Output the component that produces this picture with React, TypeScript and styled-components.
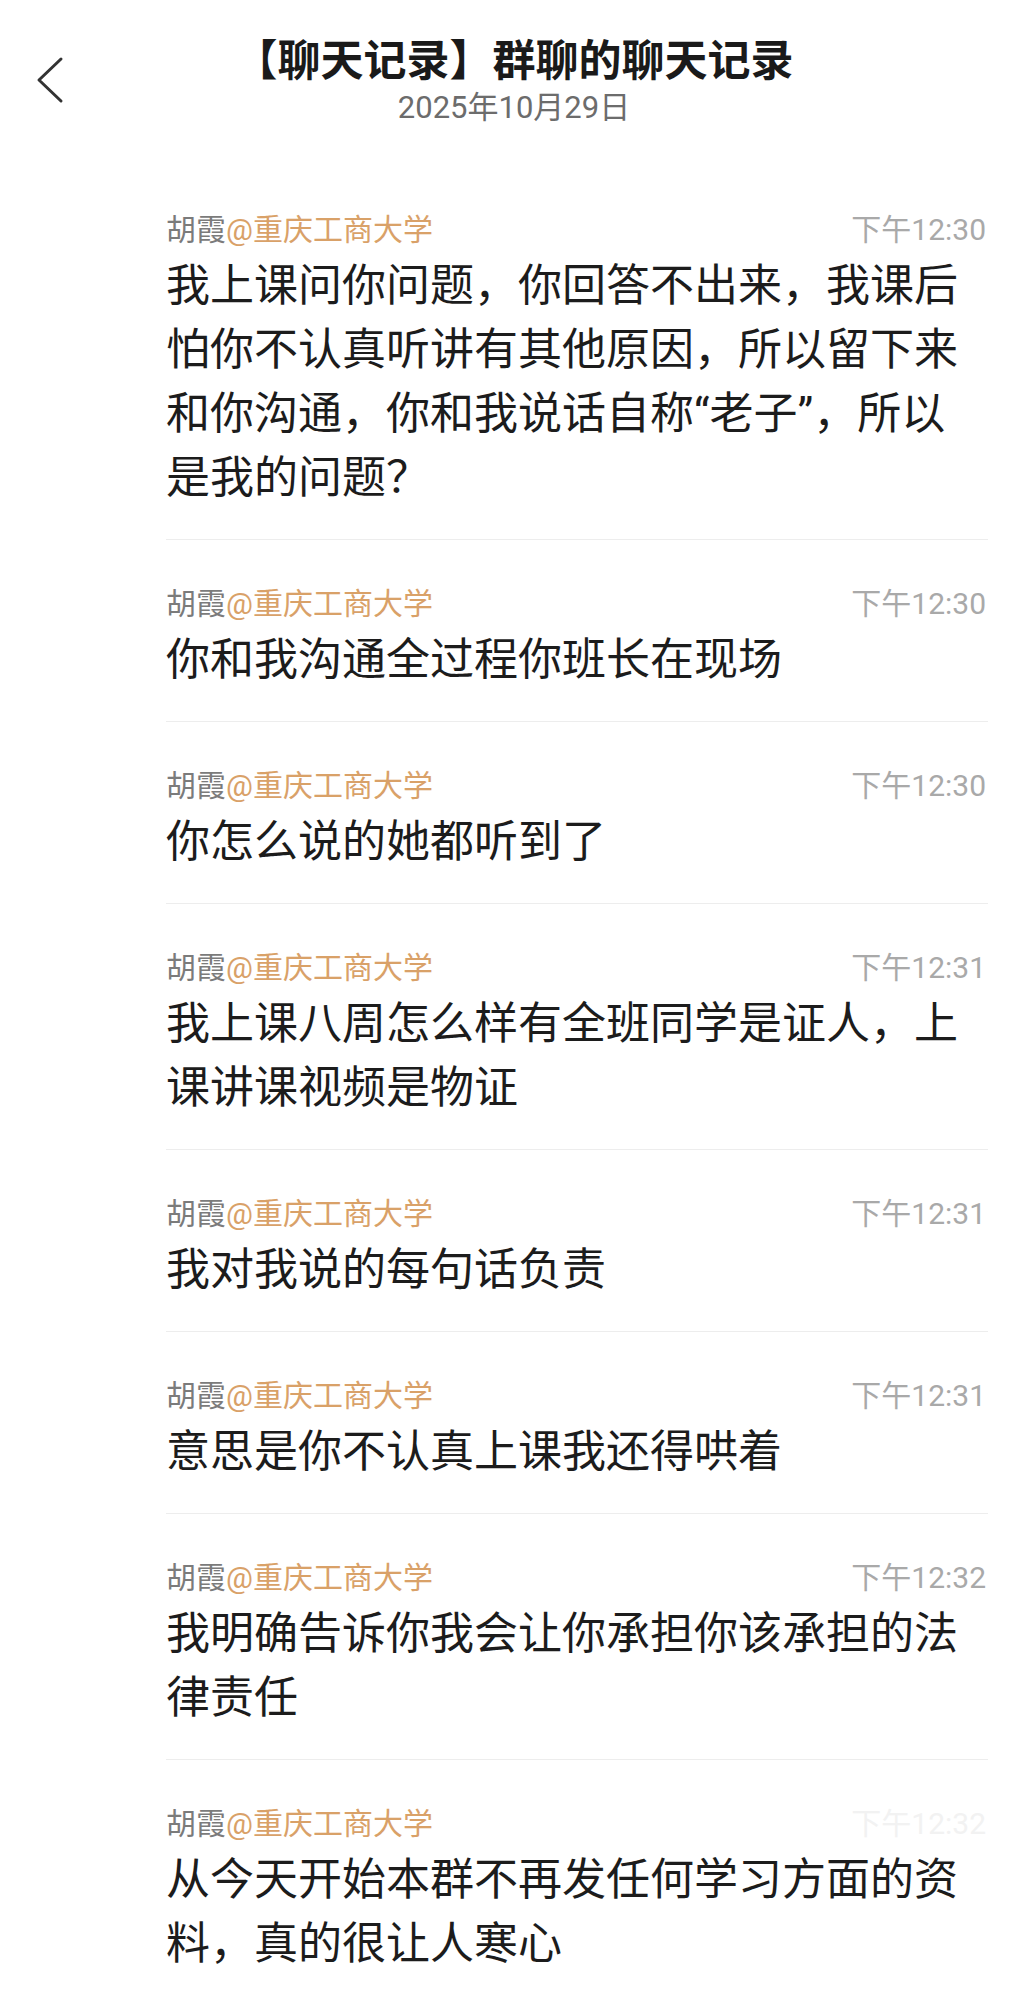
import React from "react";
import styled, { createGlobalStyle } from "styled-components";

const GlobalStyle = createGlobalStyle`
  html, body {
    margin: 0;
    padding: 0;
    background: #ffffff;
  }
  body {
    font-family: Roboto, "Noto Sans CJK SC", sans-serif;
    -webkit-font-smoothing: antialiased;
  }
`;

const Page = styled.div`
  width: 1028px;
  min-height: 1989px;
  background: #ffffff;
  overflow: hidden;
`;

const Header = styled.header`
  display: grid;
  grid-template-columns: 1fr auto 1fr;
  align-items: center;
  padding-top: 32px;
  padding-bottom: 38px;
`;

const BackButton = styled.button`
  justify-self: start;
  display: flex;
  align-items: center;
  justify-content: center;
  margin-left: 36px;
  padding: 0;
  border: 0;
  background: transparent;
  width: 28px;
  height: 48px;
  cursor: pointer;
`;

const TitleBlock = styled.div`
  display: flex;
  flex-direction: column;
  align-items: center;
  gap: 6px;
`;

const Title = styled.h1`
  margin: 0;
  font-family: "Noto Sans CJK SC", sans-serif;
  font-size: 43px;
  line-height: 50px;
  font-weight: 600;
  color: #1a1a1a;
  white-space: nowrap;
`;

const DateText = styled.div`
  font-family: Roboto, "Noto Sans CJK SC", sans-serif;
  font-size: 31px;
  line-height: 40px;
  color: #6c6c6c;
`;

const List = styled.main`
  display: flex;
  flex-direction: column;
  padding: 0 40px 0 166px;
`;

const Item = styled.article<{ $last?: boolean }>`
  display: flex;
  flex-direction: column;
  gap: 4px;
  padding: 44px 0 29px;
  border-bottom: ${(p) => (p.$last ? "none" : "1.5px solid #ededed")};
`;

const MetaRow = styled.div`
  display: flex;
  justify-content: space-between;
  align-items: baseline;
  height: 40px;
  font-family: Roboto, "Noto Sans CJK SC", sans-serif;
  font-size: 30px;
  line-height: 40px;
`;

const Sender = styled.span`
  color: #7b7b7b;
`;

const Org = styled.span`
  color: #d9a168;
`;

const Time = styled.span<{ $faded?: boolean }>`
  color: ${(p) => (p.$faded ? "#f2f2f2" : "#a9a9a9")};
  padding-right: 2px;
`;

const Body = styled.p`
  margin: 0;
  font-family: Roboto, "Noto Sans CJK SC", sans-serif;
  font-size: 44px;
  line-height: 64px;
  color: #1c1c1c;
  word-break: break-all;
`;

type Msg = { time: string; text: string; faded?: boolean };

const messages: Msg[] = [
  {
    time: "下午12:30",
    text: "我上课问你问题，你回答不出来，我课后怕你不认真听讲有其他原因，所以留下来和你沟通，你和我说话自称“老子”，所以是我的问题？",
  },
  { time: "下午12:30", text: "你和我沟通全过程你班长在现场" },
  { time: "下午12:30", text: "你怎么说的她都听到了" },
  { time: "下午12:31", text: "我上课八周怎么样有全班同学是证人，上课讲课视频是物证" },
  { time: "下午12:31", text: "我对我说的每句话负责" },
  { time: "下午12:31", text: "意思是你不认真上课我还得哄着" },
  { time: "下午12:32", text: "我明确告诉你我会让你承担你该承担的法律责任" },
  {
    time: "下午12:32",
    text: "从今天开始本群不再发任何学习方面的资料，真的很让人寒心",
    faded: true,
  },
];

const ChevronLeft = () => (
  <svg width="28" height="48" viewBox="0 0 28 48" fill="none">
    <polyline
      points="25,3 3,24 25,45"
      stroke="#333333"
      strokeWidth="3"
      strokeLinecap="round"
      strokeLinejoin="round"
      fill="none"
    />
  </svg>
);

export default function App() {
  return (
    <Page>
      <GlobalStyle />
      <Header>
        <BackButton aria-label="返回">
          <ChevronLeft />
        </BackButton>
        <TitleBlock>
          <Title>【聊天记录】群聊的聊天记录</Title>
          <DateText>2025年10月29日</DateText>
        </TitleBlock>
        <div />
      </Header>
      <List>
        {messages.map((m, i) => (
          <Item key={i} $last={i === messages.length - 1}>
            <MetaRow>
              <span>
                <Sender>胡霞</Sender>
                <Org>@重庆工商大学</Org>
              </span>
              <Time $faded={m.faded}>{m.time}</Time>
            </MetaRow>
            <Body>{m.text}</Body>
          </Item>
        ))}
      </List>
    </Page>
  );
}
